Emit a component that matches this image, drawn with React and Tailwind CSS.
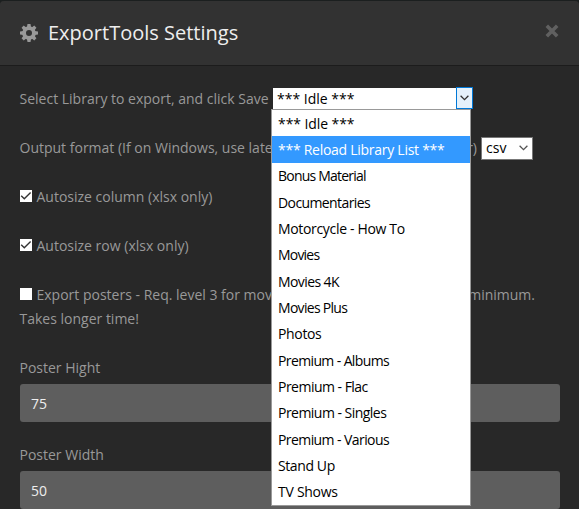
const libraries = [
  ['*** Idle ***', 'tracking-[-0.08px]'],
  ['*** Reload Library List ***', 'tracking-[-0.27px]'],
  ['Bonus Material', 'tracking-[-0.78px]'],
  ['Documentaries', 'tracking-[-0.6px]'],
  ['Motorcycle - How To', 'tracking-[-0.33px]'],
  ['Movies', 'tracking-[-0.8px]'],
  ['Movies 4K', 'tracking-[-0.6px]'],
  ['Movies Plus', 'tracking-[-0.7px]'],
  ['Photos', 'tracking-[-0.35px]'],
  ['Premium - Albums', 'tracking-[-0.62px]'],
  ['Premium - Flac', 'tracking-[-0.52px]'],
  ['Premium - Singles', 'tracking-[-0.53px]'],
  ['Premium - Various', 'tracking-[-0.58px]'],
  ['Stand Up', 'tracking-[-0.4px]'],
  ['TV Shows', 'tracking-[-0.27px]'],
];

function Gear() {
  return (
    <svg className="h-[18px] w-[18px] shrink-0" viewBox="-9 -9 18 18" fill="#999">
      {[0, 45, 90, 135, 180, 225, 270, 315].map((a) => (
        <path key={a} transform={`rotate(${a})`} d="M-2.1 -5.5 L-1.5 -9 H1.5 L2.1 -5.5 Z" />
      ))}
      <circle r="4.9" fill="none" stroke="#999" strokeWidth="3.8" />
    </svg>
  );
}

function Chevron({ color }) {
  return (
    <svg width="9" height="6" viewBox="0 0 9 6" fill="none" stroke={color} strokeWidth="1.3">
      <path d="M0.6 0.8 L4.5 4.7 L8.4 0.8" />
    </svg>
  );
}

function Check({ checked }) {
  return (
    <span className="mr-[4.5px] ml-[0.5px] inline-block h-3 w-3 bg-white align-[0px]">
      {checked && (
        <svg className="block" width="12" height="12" viewBox="0 0 12 12" fill="none" stroke="#333" strokeWidth="1.4">
          <path d="M1.2 5.8 L4.3 8.8 L10.6 2.6" />
        </svg>
      )}
    </span>
  );
}

function Field({ label, value }) {
  return (
    <div className="mb-[-4px]">
      <div className="h-6">{label}</div>
      <div className="mt-1 ml-[0.5px] flex h-[38px] items-center rounded-[3px] bg-[#5e5e5e] px-[11px] pt-0.5 text-[#eee]">
        {value}
      </div>
    </div>
  );
}

export default function App() {
  return (
    <div className="h-[509px] w-[579px] overflow-hidden bg-[#1b1f1f] pt-px font-['Open_Sans',sans-serif] text-sm leading-6 text-[#999]">
      <div className="h-[520px] overflow-hidden rounded-t-[4px] bg-[#282828]">
        <header className="flex h-[65px] items-center border-b border-[#1c1c1c] bg-[#323232] pr-5 pl-5">
          <Gear />
          <h1 className="ml-[10px] grow text-xl text-[#eee]">ExportTools Settings</h1>
          <svg className="mb-1" width="14" height="14" viewBox="0 0 14 14" stroke="#606060" strokeWidth="3.6">
            <path d="M1.8 1.8 L12.2 12.2 M12.2 1.8 L1.8 12.2" />
          </svg>
        </header>
        <main className="flex flex-col gap-[25px] pt-5 pr-[19px] pl-[19.5px]">
          <div className="mb-px flex h-6 items-center whitespace-nowrap">
            <span className="w-[253.5px] pt-0.5">Select Library to export, and click Save</span>
            <div className="relative flex h-[22px] w-[200px] shrink-0 text-black">
              <span className="mt-px grow bg-white pl-1 leading-[22px]">*** Idle ***</span>
              <span className="flex w-[17px] items-center justify-center border border-[#0078d7] bg-[#e5f1fb]">
                <Chevron color="#333" />
              </span>
              <ul className="absolute top-[22px] -left-0.5 z-10 flex h-[397px] w-[200px] flex-col border border-[#999] bg-white">
                {libraries.map(([name, tracking], i) => (
                  <li
                    key={name}
                    className={`flex flex-1 items-center pt-px pl-[6px] ${i === 1 ? 'bg-[#3399ff] text-white' : 'text-black'}`}
                  >
                    <span className={tracking}>{name}</span>
                  </li>
                ))}
              </ul>
            </div>
          </div>
          <div className="flex h-6 items-center whitespace-nowrap">
            <span className="flex w-[457.5px] justify-between">
              <span>Output format (If on Windows, use late</span>
              <span>r)</span>
            </span>
            <span className="ml-1 flex h-[23px] w-[52px] items-center justify-between border border-[#777] bg-white pr-1 pl-1 text-black">
              csv
              <Chevron color="#555" />
            </span>
          </div>
          <div className="h-6"><Check checked />Autosize column (xlsx only)</div>
          <div className="h-6"><Check checked />Autosize row (xlsx only)</div>
          <div className="h-12 whitespace-nowrap">
            <div className="flex w-[515.5px] justify-between">
              <span><Check />Export posters - Req. level 3 for mov</span>
              <span>minimum.</span>
            </div>
            <div>Takes longer time!</div>
          </div>
          <Field label="Poster Hight" value="75" />
          <Field label="Poster Width" value="50" />
        </main>
      </div>
    </div>
  );
}
